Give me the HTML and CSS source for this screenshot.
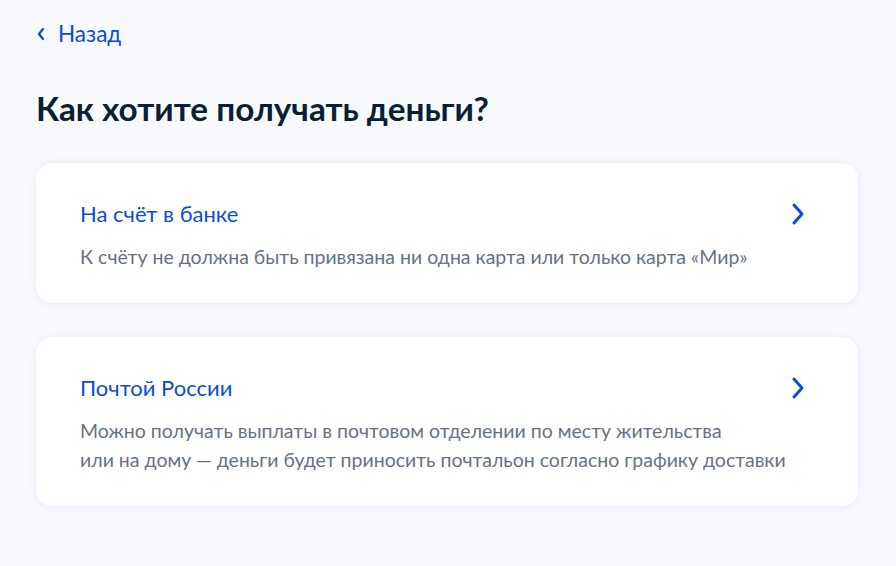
FILE: index.html
```html
<!DOCTYPE html>
<html lang="ru">
<head>
<meta charset="utf-8">
<link rel="stylesheet" href="styles.css">
</head>
<body>
<div class="page">
  <a class="back" href="#">
    <svg class="back-icon" width="10" height="14" viewBox="0 0 10 14"><path d="M7 2 L3 7 L7 12" fill="none" stroke="#0d4cd3" stroke-width="2.2" stroke-linecap="round" stroke-linejoin="round"/></svg>
    <span>Назад</span>
  </a>
  <h1 class="title">Как хотите получать деньги?</h1>
  <div class="cards">
    <a class="card" href="#">
      <div class="card-head">
        <span class="card-title">На счёт в банке</span>
        <svg class="chev" width="16" height="24" viewBox="0 0 16 24"><path d="M4 3 L12 12 L4 21" fill="none" stroke="#0d4cd3" stroke-width="3" stroke-linecap="round" stroke-linejoin="round"/></svg>
      </div>
      <p class="card-text">К счёту не должна быть привязана ни одна карта или только карта «Мир»</p>
    </a>
    <a class="card" href="#">
      <div class="card-head">
        <span class="card-title">Почтой России</span>
        <svg class="chev" width="16" height="24" viewBox="0 0 16 24"><path d="M4 3 L12 12 L4 21" fill="none" stroke="#0d4cd3" stroke-width="3" stroke-linecap="round" stroke-linejoin="round"/></svg>
      </div>
      <p class="card-text">Можно получать выплаты в почтовом отделении по месту жительства<br>или на дому — деньги будет приносить почтальон согласно графику доставки</p>
    </a>
  </div>
</div>
</body>
</html>
```
FILE: styles.css
```css
* { box-sizing: border-box; }
html, body { margin: 0; padding: 0; }
body {
  background: #f8f9fd;
  font-family: Lato, "Noto Sans", "Open Sans", sans-serif;
  width: 896px;
  height: 566px;
  overflow: hidden;
}
.page {
  padding: 21px 38px 0 36px;
}
.back {
  display: flex;
  align-items: center;
  gap: 12px;
  color: #0d4cd3;
  text-decoration: none;
  font-size: 22.5px;
  line-height: 26px;
}
.title {
  margin: 41px 0 0 0;
  font-size: 33.3px;
  line-height: 40px;
  font-weight: 700;
  color: #0b1f33;
}
.cards {
  margin-top: 35px;
  display: flex;
  flex-direction: column;
  gap: 34px;
}
.card {
  display: block;
  background: #fff;
  border-radius: 16px;
  box-shadow: 0 1px 8px rgba(200, 210, 230, 0.35);
  padding: 37px 52px 32px 44px;
  text-decoration: none;
}
.card-head {
  display: flex;
  justify-content: space-between;
  align-items: center;
}
.card-title {
  color: #0d4cd3;
  font-size: 22px;
  line-height: 28px;
}
.chev { display: block; }
.card-text {
  margin: 14px 0 0 0;
  color: #66727f;
  font-size: 19.5px;
  line-height: 29px;
}
```
